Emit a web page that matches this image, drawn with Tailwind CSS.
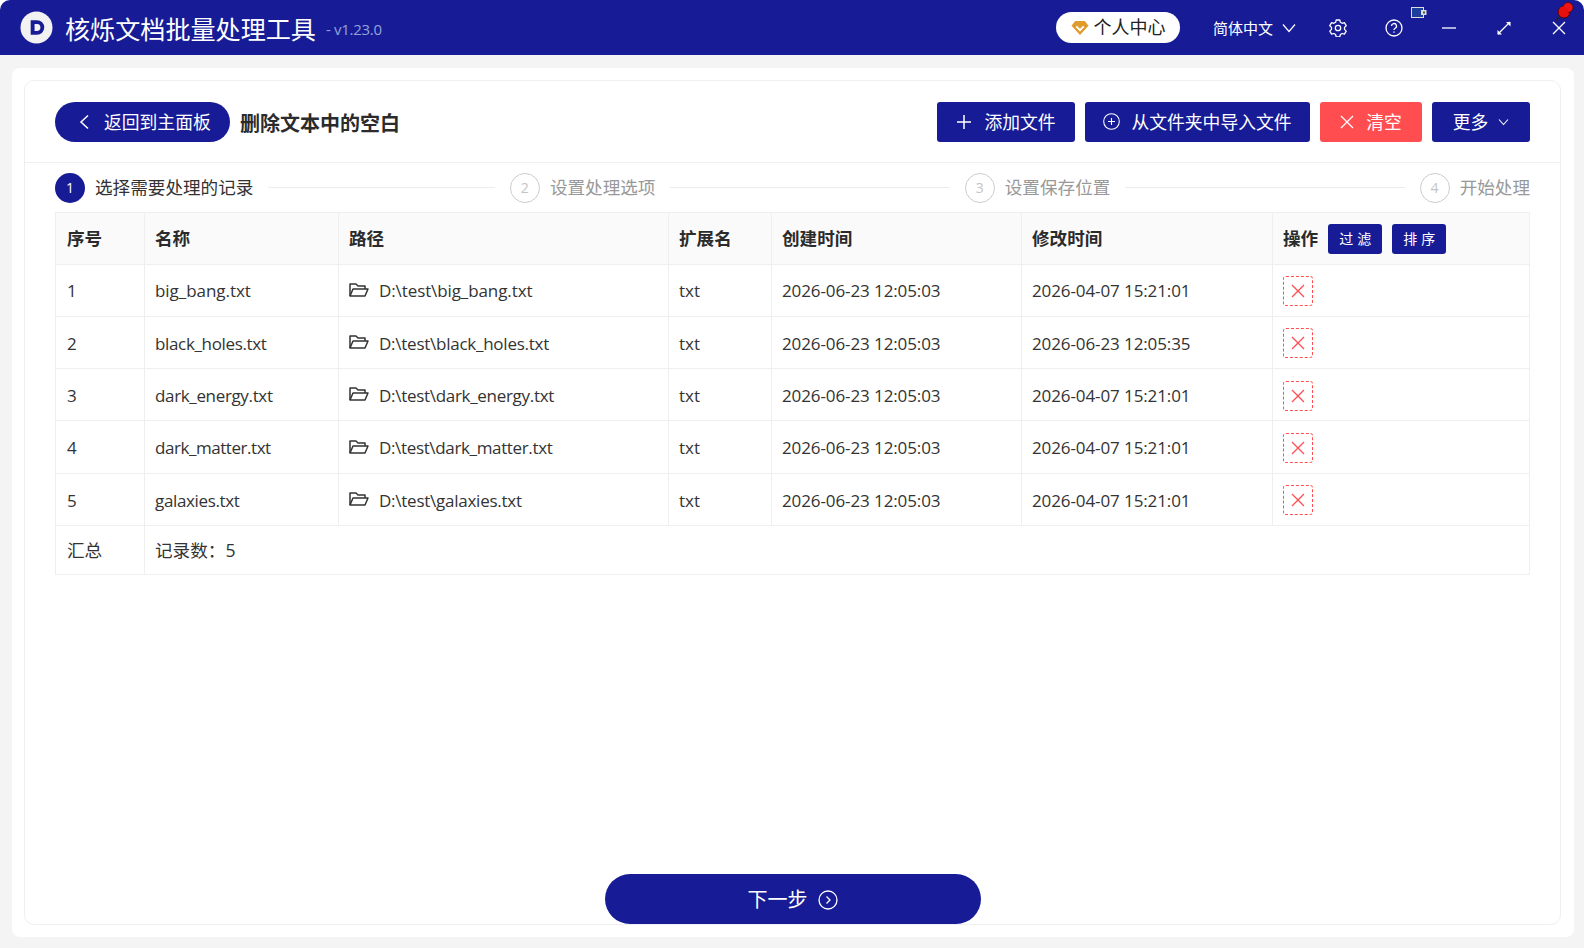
<!DOCTYPE html>
<html lang="zh-CN">
<head>
    <meta charset="UTF-8">
    <title>核烁文档批量处理工具</title>
    <script src="https://cdn.jsdelivr.net/npm/@tailwindcss/browser@4"></script>
</head>
<body class="bg-white overflow-hidden font-['Open_Sans','Noto_Sans_CJK_SC',sans-serif] text-[#333]">
<div class="relative w-[1584px] h-[948px] flex flex-col bg-[#f4f4f4] rounded-t-[10px] overflow-hidden">

    <!-- title bar -->
    <header class="h-[55px] shrink-0 bg-[#171c96] text-white flex items-center pl-[20px] pr-[18px]">
        <svg class="w-[33px] h-[33px] shrink-0" viewBox="0 0 34 34">
            <circle cx="17" cy="17" r="16.500" fill="#f2f2f2"/>
            <path d="M11 9.500h6.500a7.500 7.500 0 0 1 0 15H11z" fill="#171c96"/>
            <path d="M15 13.500h2.500a3.500 3.500 0 0 1 0 7H15z" fill="#f2f2f2"/>
        </svg>
        <span class="ml-[12px] pt-[4px] text-[25.100px] leading-none">核烁文档批量处理工具</span>
        <span class="ml-[10px] mt-[3px] text-[15px] text-[#93a3d8] tracking-[-0.3px]">- v1.23.0</span>
        <div class="ml-auto w-[124px] h-[31px] rounded-full bg-white flex items-center justify-center gap-[3px] text-[#222] text-[18px]">
            <svg class="w-[20px] h-[16px]" viewBox="0 0 18 15"><path d="M4.500 1h9L17 5.500 9 14 1 5.500z" fill="#e09b2d"/><path d="M5.500 6l3.500 3.500L12.500 6" fill="none" stroke="#fff" stroke-width="1.800"/></svg>
            <span>个人中心</span>
        </div>
        <div class="ml-[33px] flex items-center gap-[9px] text-[15px]">
            <span class="pt-[2px]">简体中文</span>
            <svg class="w-[14px] h-[10px]" viewBox="0 0 14 10" fill="none" stroke="#fff" stroke-width="1.200"><path d="M1 1.500l6 7 6-7"/></svg>
        </div>
        <svg class="ml-[33px] w-[18px] h-[18px]" viewBox="0 0 18 18" fill="none" stroke="#fff" stroke-width="1.300" stroke-linejoin="round"><path d="M7.200 1.500h3.600l.6 2.300 1.700 1 2.300-.7 1.800 3.100-1.700 1.700v2l1.700 1.700-1.800 3.100-2.300-.7-1.700 1-.6 2.300H7.200l-.6-2.300-1.700-1-2.300.7-1.800-3.100 1.700-1.700v-2L.8 7.200l1.800-3.100 2.300.7 1.700-1z" transform="translate(0 -.5)"/><circle cx="9" cy="9" r="2.700"/></svg>
        <svg class="ml-[38px] w-[18px] h-[18px]" viewBox="0 0 18 18" fill="none" stroke="#fff" stroke-width="1.300"><circle cx="9" cy="9" r="8"/><path d="M6.500 7a2.500 2.500 0 1 1 3.700 2.200C9.400 9.700 9 10.200 9 11"/><path d="M9 12.500v1.300"/></svg>
        <svg class="ml-[39px] w-[14px] h-[2px]" viewBox="0 0 14 2"><path d="M0 1h14" stroke="#fff" stroke-width="1.300"/></svg>
        <svg class="ml-[41px] w-[14px] h-[14px]" viewBox="0 0 14 14" fill="none" stroke="#fff" stroke-width="1.200"><path d="M1 13L13 1"/><path d="M9 1h4.500v4.500z" fill="#fff" stroke="none"/><path d="M.5 9v4.500H5z" fill="#fff" stroke="none"/></svg>
        <svg class="ml-[41px] w-[14px] h-[14px]" viewBox="0 0 14 14" fill="none" stroke="#fff" stroke-width="1.300"><path d="M1 1l12 12M13 1L1 13"/></svg>
    </header>

    <!-- tray badges over the title bar -->
    <svg class="absolute left-[1411px] top-[7px] w-[16px] h-[11px]" viewBox="0 0 16 11"><rect x=".5" y=".5" width="12" height="10" fill="#1c3f9e" stroke="#ddd"/><rect x="10" y="3" width="5.500" height="5" fill="#ddd"/><rect x="12" y="4.500" width="2" height="2" fill="#555"/></svg>
    <svg class="absolute left-[1554px] top-[1px] w-[20px] h-[22px]" viewBox="0 0 20 22"><path d="M1.500 20l5-5" stroke="#222" stroke-width="1.500"/><circle cx="10" cy="11" r="6" fill="#e80f0f" stroke="#400" stroke-width=".8"/><circle cx="14" cy="6.500" r="5" fill="#f01414" stroke="#400" stroke-width=".6"/><circle cx="9.500" cy="10" r="4.500" fill="#e80f0f"/></svg>

    <main class="ml-[12px] mr-[10px] mt-[13px] h-[869px] bg-white rounded-[8px] p-[12px] pr-[13px]">
        <div class="h-full border border-[#efefef] rounded-[10px] flex flex-col">

            <!-- toolbar -->
            <div class="h-[82px] shrink-0 border-b border-[#efefef] flex items-center pl-[30px] pr-[30px] text-[17.800px]">
                <button class="h-[40px] w-[175px] rounded-full bg-[#171c96] text-white flex items-center pl-[24px]">
                    <svg class="w-[11px] h-[16px] mr-[14px]" viewBox="0 0 11 16" fill="none" stroke="#fff" stroke-width="1.500"><path d="M9 1.500L2 8l7 6.500"/></svg>
                    <span class="pt-[2px]">返回到主面板</span>
                </button>
                <span class="ml-[10px] pt-[4px] text-[20px] font-bold text-[#2b2b2b]">删除文本中的空白</span>
                <div class="ml-auto flex gap-[10px] text-white">
                    <button class="h-[40px] w-[138px] rounded-[3px] bg-[#171c96] flex items-center justify-center gap-[12px]">
                        <svg class="w-[16px] h-[16px]" viewBox="0 0 16 16" stroke="#fff" stroke-width="1.500"><path d="M8 1v14M1 8h14"/></svg>
                        <span class="pt-[2px]">添加文件</span>
                    </button>
                    <button class="h-[40px] w-[225px] rounded-[3px] bg-[#171c96] flex items-center justify-center gap-[11px]">
                        <svg class="w-[17px] h-[17px]" viewBox="0 0 17 17" fill="none" stroke="#fff" stroke-width="1.100"><circle cx="8.500" cy="8.500" r="7.800"/><path d="M8.500 5v7M5 8.500h7"/></svg>
                        <span class="pt-[2px]">从文件夹中导入文件</span>
                    </button>
                    <button class="h-[40px] w-[102px] rounded-[3px] bg-[#ff4d50] flex items-center justify-center gap-[12px]">
                        <svg class="w-[14px] h-[14px]" viewBox="0 0 14 14" stroke="#fff" stroke-width="1.300"><path d="M1 1l12 12M13 1L1 13"/></svg>
                        <span class="pt-[2px]">清空</span>
                    </button>
                    <button class="h-[40px] w-[98px] rounded-[3px] bg-[#171c96] flex items-center justify-center gap-[10px]">
                        <span class="pt-[2px]">更多</span>
                        <svg class="w-[11px] h-[8px]" viewBox="0 0 11 8" fill="none" stroke="#fff" stroke-width="1.100"><path d="M1 1.500l4.500 5 4.500-5"/></svg>
                    </button>
                </div>
            </div>

            <!-- steps -->
            <div class="h-[49px] shrink-0 flex items-center pl-[30px] pr-[30px] text-[17.600px]">
                <div class="flex-1 flex items-center">
                    <span class="w-[30px] h-[30px] rounded-full bg-[#171c96] text-white text-[14px] flex items-center justify-center">1</span>
                    <span class="ml-[10px] text-[#333]">选择需要处理的记录</span>
                    <span class="flex-1 h-px bg-[#ececec] mx-[15px]"></span>
                </div>
                <div class="flex-1 flex items-center text-[#999]">
                    <span class="w-[30px] h-[30px] rounded-full border border-[#ccc] text-[#c4c4c4] text-[14px] flex items-center justify-center">2</span>
                    <span class="ml-[10px]">设置处理选项</span>
                    <span class="flex-1 h-px bg-[#ececec] mx-[15px]"></span>
                </div>
                <div class="flex-1 flex items-center text-[#999]">
                    <span class="w-[30px] h-[30px] rounded-full border border-[#ccc] text-[#c4c4c4] text-[14px] flex items-center justify-center">3</span>
                    <span class="ml-[10px]">设置保存位置</span>
                    <span class="flex-1 h-px bg-[#ececec] mx-[15px]"></span>
                </div>
                <div class="flex items-center text-[#999]">
                    <span class="w-[30px] h-[30px] rounded-full border border-[#ccc] text-[#c4c4c4] text-[14px] flex items-center justify-center">4</span>
                    <span class="ml-[10px]">开始处理</span>
                </div>
            </div>

            <!-- record table -->
            <div class="mx-[30px]">
                <table class="w-full table-fixed border-collapse text-[17px] text-[#333]">
                    <colgroup>
                        <col class="w-[89px]"><col class="w-[194px]"><col class="w-[330px]"><col class="w-[103px]"><col class="w-[250px]"><col class="w-[251px]"><col>
                    </colgroup>
                    <thead class="bg-[#fafafa] text-[17.600px] font-bold text-[#2b2b2b]">
                        <tr class="h-[51.500px] text-left">
                            <th class="border border-[#efefef] pl-[11px]">序号</th>
                            <th class="border border-[#efefef] pl-[10px]">名称</th>
                            <th class="border border-[#efefef] pl-[10px]">路径</th>
                            <th class="border border-[#efefef] pl-[10px]">扩展名</th>
                            <th class="border border-[#efefef] pl-[10px]">创建时间</th>
                            <th class="border border-[#efefef] pl-[10px]">修改时间</th>
                            <th class="border border-[#efefef] pl-[10px]">
                                <div class="flex items-center">
                                    操作
                                    <span class="ml-[10px] mt-[1px] w-[54px] h-[30px] rounded-[3px] bg-[#171c96] text-white text-[14px] font-normal tracking-[4px] pl-[4px] flex items-center justify-center">过滤</span>
                                    <span class="ml-[10px] mt-[1px] w-[54px] h-[30px] rounded-[3px] bg-[#171c96] text-white text-[14px] font-normal tracking-[4px] pl-[4px] flex items-center justify-center">排序</span>
                                </div>
                            </th>
                        </tr>
                    </thead>
                    <tbody>
                        <tr class="h-[52.300px]">
                            <td class="border border-[#efefef] pl-[11px] pt-[2px]">1</td>
                            <td class="border border-[#efefef] pl-[10px] pt-[2px] tracking-[-0.05px]">big_bang.txt</td>
                            <td class="border border-[#efefef] pl-[10px] pt-[2px] tracking-[-0.1px]"><div class="flex items-center gap-[10px]"><svg class="w-[20px] h-[16px] -mt-[3px]" viewBox="0 0 20 16" fill="none" stroke="#333" stroke-width="1.500" stroke-linejoin="round"><path d="M1 14V2h6l2 2h7v3"/><path d="M1 14l3-7h15l-3 7z"/></svg>D:\test\big_bang.txt</div></td>
                            <td class="border border-[#efefef] pl-[10px] pt-[2px]">txt</td>
                            <td class="border border-[#efefef] pl-[10px] pt-[2px] tracking-[-0.1px]">2026-06-23 12:05:03</td>
                            <td class="border border-[#efefef] pl-[10px] pt-[2px] tracking-[-0.1px]">2026-04-07 15:21:01</td>
                            <td class="border border-[#efefef] pl-[10px] pt-[2px]"><span class="w-[30px] h-[30px] rounded-[3px] border border-dashed border-[#ff4d50] flex items-center justify-center"><svg class="w-[14px] h-[14px]" viewBox="0 0 14 14" stroke="#ff4d50" stroke-width="1.300"><path d="M1 1l12 12M13 1L1 13"/></svg></span></td>
                        </tr>
                        <tr class="h-[52.300px]">
                            <td class="border border-[#efefef] pl-[11px] pt-[2px]">2</td>
                            <td class="border border-[#efefef] pl-[10px] pt-[2px] tracking-[-0.35px]">black_holes.txt</td>
                            <td class="border border-[#efefef] pl-[10px] pt-[2px] tracking-[-0.25px]"><div class="flex items-center gap-[10px]"><svg class="w-[20px] h-[16px] -mt-[3px]" viewBox="0 0 20 16" fill="none" stroke="#333" stroke-width="1.500" stroke-linejoin="round"><path d="M1 14V2h6l2 2h7v3"/><path d="M1 14l3-7h15l-3 7z"/></svg>D:\test\black_holes.txt</div></td>
                            <td class="border border-[#efefef] pl-[10px] pt-[2px]">txt</td>
                            <td class="border border-[#efefef] pl-[10px] pt-[2px] tracking-[-0.1px]">2026-06-23 12:05:03</td>
                            <td class="border border-[#efefef] pl-[10px] pt-[2px] tracking-[-0.1px]">2026-06-23 12:05:35</td>
                            <td class="border border-[#efefef] pl-[10px] pt-[2px]"><span class="w-[30px] h-[30px] rounded-[3px] border border-dashed border-[#ff4d50] flex items-center justify-center"><svg class="w-[14px] h-[14px]" viewBox="0 0 14 14" stroke="#ff4d50" stroke-width="1.300"><path d="M1 1l12 12M13 1L1 13"/></svg></span></td>
                        </tr>
                        <tr class="h-[52.300px]">
                            <td class="border border-[#efefef] pl-[11px] pt-[2px]">3</td>
                            <td class="border border-[#efefef] pl-[10px] pt-[2px] tracking-[-0.35px]">dark_energy.txt</td>
                            <td class="border border-[#efefef] pl-[10px] pt-[2px] tracking-[-0.3px]"><div class="flex items-center gap-[10px]"><svg class="w-[20px] h-[16px] -mt-[3px]" viewBox="0 0 20 16" fill="none" stroke="#333" stroke-width="1.500" stroke-linejoin="round"><path d="M1 14V2h6l2 2h7v3"/><path d="M1 14l3-7h15l-3 7z"/></svg>D:\test\dark_energy.txt</div></td>
                            <td class="border border-[#efefef] pl-[10px] pt-[2px]">txt</td>
                            <td class="border border-[#efefef] pl-[10px] pt-[2px] tracking-[-0.1px]">2026-06-23 12:05:03</td>
                            <td class="border border-[#efefef] pl-[10px] pt-[2px] tracking-[-0.1px]">2026-04-07 15:21:01</td>
                            <td class="border border-[#efefef] pl-[10px] pt-[2px]"><span class="w-[30px] h-[30px] rounded-[3px] border border-dashed border-[#ff4d50] flex items-center justify-center"><svg class="w-[14px] h-[14px]" viewBox="0 0 14 14" stroke="#ff4d50" stroke-width="1.300"><path d="M1 1l12 12M13 1L1 13"/></svg></span></td>
                        </tr>
                        <tr class="h-[52.300px]">
                            <td class="border border-[#efefef] pl-[11px] pt-[2px]">4</td>
                            <td class="border border-[#efefef] pl-[10px] pt-[2px] tracking-[-0.45px]">dark_matter.txt</td>
                            <td class="border border-[#efefef] pl-[10px] pt-[2px] tracking-[-0.35px]"><div class="flex items-center gap-[10px]"><svg class="w-[20px] h-[16px] -mt-[3px]" viewBox="0 0 20 16" fill="none" stroke="#333" stroke-width="1.500" stroke-linejoin="round"><path d="M1 14V2h6l2 2h7v3"/><path d="M1 14l3-7h15l-3 7z"/></svg>D:\test\dark_matter.txt</div></td>
                            <td class="border border-[#efefef] pl-[10px] pt-[2px]">txt</td>
                            <td class="border border-[#efefef] pl-[10px] pt-[2px] tracking-[-0.1px]">2026-06-23 12:05:03</td>
                            <td class="border border-[#efefef] pl-[10px] pt-[2px] tracking-[-0.1px]">2026-04-07 15:21:01</td>
                            <td class="border border-[#efefef] pl-[10px] pt-[2px]"><span class="w-[30px] h-[30px] rounded-[3px] border border-dashed border-[#ff4d50] flex items-center justify-center"><svg class="w-[14px] h-[14px]" viewBox="0 0 14 14" stroke="#ff4d50" stroke-width="1.300"><path d="M1 1l12 12M13 1L1 13"/></svg></span></td>
                        </tr>
                        <tr class="h-[52.300px]">
                            <td class="border border-[#efefef] pl-[11px] pt-[2px]">5</td>
                            <td class="border border-[#efefef] pl-[10px] pt-[2px] tracking-[-0.35px]">galaxies.txt</td>
                            <td class="border border-[#efefef] pl-[10px] pt-[2px] tracking-[-0.25px]"><div class="flex items-center gap-[10px]"><svg class="w-[20px] h-[16px] -mt-[3px]" viewBox="0 0 20 16" fill="none" stroke="#333" stroke-width="1.500" stroke-linejoin="round"><path d="M1 14V2h6l2 2h7v3"/><path d="M1 14l3-7h15l-3 7z"/></svg>D:\test\galaxies.txt</div></td>
                            <td class="border border-[#efefef] pl-[10px] pt-[2px]">txt</td>
                            <td class="border border-[#efefef] pl-[10px] pt-[2px] tracking-[-0.1px]">2026-06-23 12:05:03</td>
                            <td class="border border-[#efefef] pl-[10px] pt-[2px] tracking-[-0.1px]">2026-04-07 15:21:01</td>
                            <td class="border border-[#efefef] pl-[10px] pt-[2px]"><span class="w-[30px] h-[30px] rounded-[3px] border border-dashed border-[#ff4d50] flex items-center justify-center"><svg class="w-[14px] h-[14px]" viewBox="0 0 14 14" stroke="#ff4d50" stroke-width="1.300"><path d="M1 1l12 12M13 1L1 13"/></svg></span></td>
                        </tr>
                        <tr class="h-[49px]">
                            <td class="border border-[#efefef] pl-[11px] text-[17.600px]">汇总</td>
                            <td colspan="6" class="border border-[#efefef] pl-[10px] text-[17.600px]">记录数：5</td>
                        </tr>
                    </tbody>
                </table>
            </div>

            <button class="mt-auto self-center w-[376px] h-[50px] rounded-full bg-[#171c96] text-white text-[20px] flex items-center justify-center gap-[10px]">
                <span class="pt-[2px]">下一步</span>
                <svg class="w-[20px] h-[20px] mt-[2px]" viewBox="0 0 20 20" fill="none" stroke="#fff" stroke-width="1.300"><circle cx="10" cy="10" r="9"/><path d="M8.500 6.500L12 10l-3.500 3.500"/></svg>
            </button>
        </div>
    </main>
</div>
</body>
</html>
